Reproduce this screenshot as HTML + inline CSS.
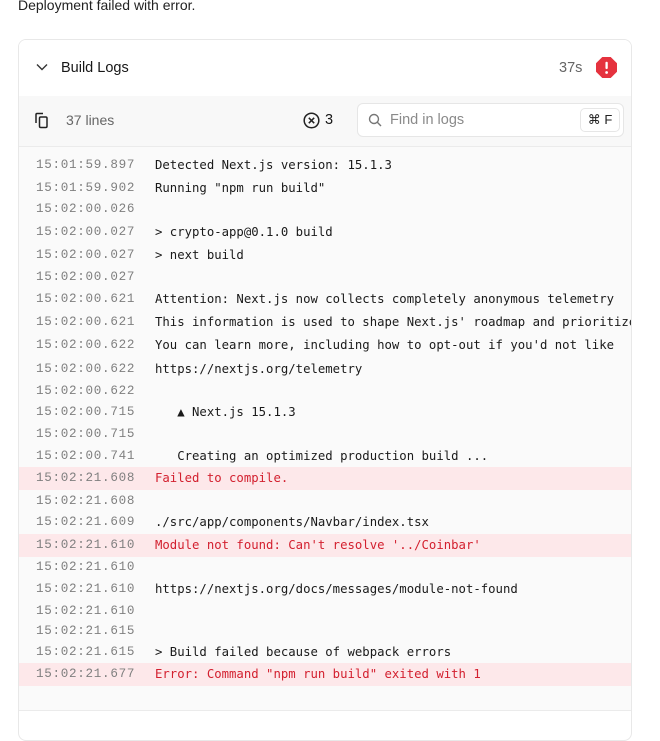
<!DOCTYPE html>
<html><head><meta charset="utf-8"><style>
body{margin:0;width:660px;height:720px;background:#fff;font-family:"Liberation Sans",sans-serif;overflow:hidden;position:relative;color:#171717}
.top{position:absolute;left:18px;top:-3px;font-size:14px;color:#222}
.card{position:absolute;left:18px;top:39px;width:612px;height:700px;border:1px solid #e8e8e8;border-radius:8px;overflow:hidden;background:#fff}
.hdr{position:absolute;left:0;top:0;width:100%;height:56px;border-bottom:1px solid #ebebeb;background:#fff}
.tb{position:absolute;left:0;top:56px;width:100%;height:50px;background:#f8f8f8;border-bottom:1px solid #ebebeb}
.logs{position:absolute;left:0;top:107px;width:100%;height:563px;background:#fafafa;border-bottom:1px solid #ebebeb}
.r{position:absolute;left:0;width:100%;height:22px;line-height:22px;font-family:"DejaVu Sans Mono","Liberation Mono",monospace;font-size:12.3px;white-space:pre;color:#1a1a1a}
.r .t{position:absolute;left:17px;color:#7f7f7f;letter-spacing:0.7px;font-family:"Liberation Mono",monospace;font-size:12.6px}
.r .m{position:absolute;left:136px}
.r.e{background:#fde8ea}
.r.e .m{color:#d3202f}
</style></head><body>
<div class="top">Deployment failed with error.</div>
<div class="card">
 <div class="hdr">
  <svg style="position:absolute;left:17px;top:23px" width="12" height="8" viewBox="0 0 12 8"><path d="M1 1.5L6 6.5L11 1.5" fill="none" stroke="#333" stroke-width="1.4"/></svg>
  <div style="position:absolute;left:42px;top:20px;font-size:14.5px;color:#171717">Build Logs</div>
  <div style="position:absolute;left:540px;top:20px;font-size:14.5px;color:#666">37s</div>
  <svg style="position:absolute;left:577px;top:17px" width="21" height="21" viewBox="0 0 20 20"><polygon points="6,0 14,0 20,6 20,14 14,20 6,20 0,14 0,6" fill="#e5323e"/><rect x="9" y="4.5" width="2.2" height="7" rx="1" fill="#fff"/><circle cx="10.1" cy="14.8" r="1.3" fill="#fff"/></svg>
 </div>
 <div class="tb">
  <svg style="position:absolute;left:15px;top:16px" width="16" height="17" viewBox="0 0 16 17"><path d="M2 11V2.5Q2 1.5 3 1.5H9" fill="none" stroke="#222" stroke-width="1.5"/><rect x="5.5" y="5" width="7.5" height="10.5" rx="1.3" fill="none" stroke="#222" stroke-width="1.5"/></svg>
  <div style="position:absolute;left:47px;top:16px;font-size:14px;color:#666">37 lines</div>
  <svg style="position:absolute;left:284px;top:16px" width="17" height="17" viewBox="0 0 17 17"><circle cx="8.5" cy="8.5" r="7.3" fill="none" stroke="#222" stroke-width="1.5"/><path d="M5.8 5.8L11.2 11.2M11.2 5.8L5.8 11.2" stroke="#222" stroke-width="1.5"/></svg>
  <div style="position:absolute;left:306px;top:16px;font-size:14.5px;color:#171717">3</div>
  <div style="position:absolute;left:338px;top:7px;width:265px;height:32px;border:1px solid #e6e6e6;border-radius:6px;background:#fff">
   <svg style="position:absolute;left:10px;top:9px" width="14" height="14" viewBox="0 0 14 14"><circle cx="6" cy="6" r="4.5" fill="none" stroke="#777" stroke-width="1.4"/><path d="M9.3 9.3L13 13" stroke="#777" stroke-width="1.4"/></svg>
   <div style="position:absolute;left:32px;top:8px;font-size:14.5px;color:#8a8a8a">Find in logs</div>
   <div style="position:absolute;left:222px;top:4px;width:38px;height:22px;border:1px solid #e6e6e6;border-radius:5px;font-size:13px;line-height:22px;text-align:center;color:#222">⌘ F</div>
  </div>
 </div>
 <div class="logs">
<div class="r" style="top:7px"><span class="t">15:01:59.897</span><span class="m">Detected Next.js version: 15.1.3</span></div>
<div class="r" style="top:30px"><span class="t">15:01:59.902</span><span class="m">Running "npm run build"</span></div>
<div class="r" style="top:51px"><span class="t">15:02:00.026</span></div>
<div class="r" style="top:74px"><span class="t">15:02:00.027</span><span class="m">&gt; crypto-app@0.1.0 build</span></div>
<div class="r" style="top:97px"><span class="t">15:02:00.027</span><span class="m">&gt; next build</span></div>
<div class="r" style="top:119px"><span class="t">15:02:00.027</span></div>
<div class="r" style="top:141px"><span class="t">15:02:00.621</span><span class="m">Attention: Next.js now collects completely anonymous telemetry</span></div>
<div class="r" style="top:164px"><span class="t">15:02:00.621</span><span class="m">This information is used to shape Next.js' roadmap and prioritize</span></div>
<div class="r" style="top:187px"><span class="t">15:02:00.622</span><span class="m">You can learn more, including how to opt-out if you'd not like</span></div>
<div class="r" style="top:211px"><span class="t">15:02:00.622</span><span class="m">https://nextjs.org/telemetry</span></div>
<div class="r" style="top:233px"><span class="t">15:02:00.622</span></div>
<div class="r" style="top:254px"><span class="t">15:02:00.715</span><span class="m">   ▲ Next.js 15.1.3</span></div>
<div class="r" style="top:276px"><span class="t">15:02:00.715</span></div>
<div class="r" style="top:298px"><span class="t">15:02:00.741</span><span class="m">   Creating an optimized production build ...</span></div>
<div class="r e" style="top:320px;height:23px"><span class="t">15:02:21.608</span><span class="m">Failed to compile.</span></div>
<div class="r" style="top:343px"><span class="t">15:02:21.608</span></div>
<div class="r" style="top:364px"><span class="t">15:02:21.609</span><span class="m">./src/app/components/Navbar/index.tsx</span></div>
<div class="r e" style="top:387px;height:23px"><span class="t">15:02:21.610</span><span class="m">Module not found: Can't resolve '../Coinbar'</span></div>
<div class="r" style="top:409px"><span class="t">15:02:21.610</span></div>
<div class="r" style="top:431px"><span class="t">15:02:21.610</span><span class="m">https://nextjs.org/docs/messages/module-not-found</span></div>
<div class="r" style="top:453px"><span class="t">15:02:21.610</span></div>
<div class="r" style="top:473px"><span class="t">15:02:21.615</span></div>
<div class="r" style="top:494px"><span class="t">15:02:21.615</span><span class="m">&gt; Build failed because of webpack errors</span></div>
<div class="r e" style="top:516px;height:23px"><span class="t">15:02:21.677</span><span class="m">Error: Command "npm run build" exited with 1</span></div>
 </div>
</div>
</body></html>
